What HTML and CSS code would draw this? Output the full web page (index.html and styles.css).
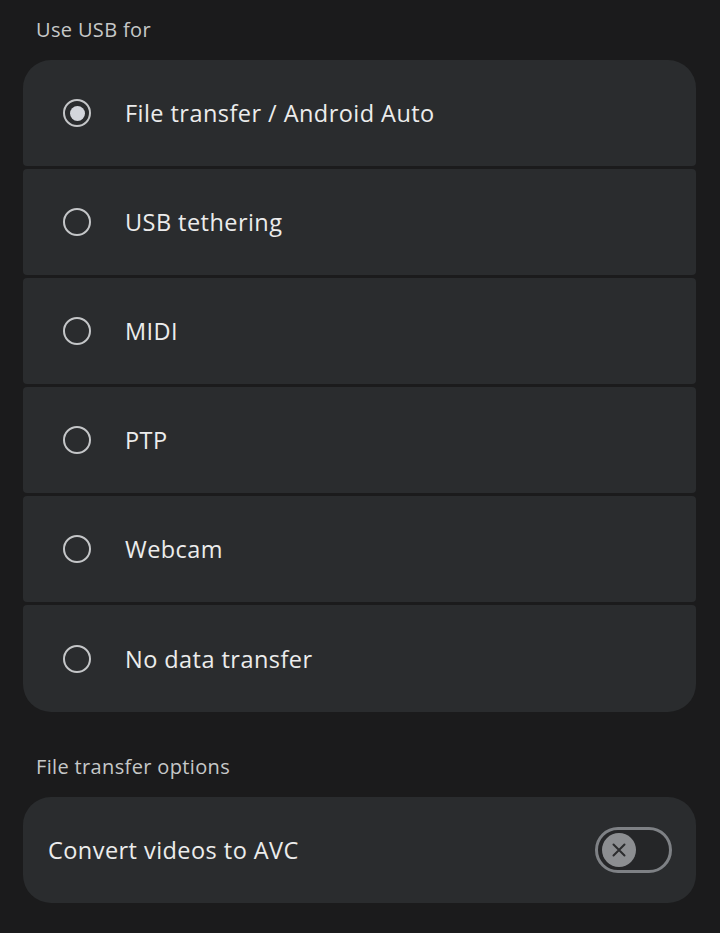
FILE: index.html
```html
<!DOCTYPE html>
<html>
<head>
<meta charset="utf-8">
<link rel="stylesheet" href="styles.css">
</head>
<body>
<div class="page">
  <div class="section-title">Use USB for</div>
  <div class="group">
    <div class="row">
      <span class="radio checked"><span class="dot"></span></span>
      <span class="label">File transfer / Android Auto</span>
    </div>
    <div class="row">
      <span class="radio"></span>
      <span class="label">USB tethering</span>
    </div>
    <div class="row">
      <span class="radio"></span>
      <span class="label">MIDI</span>
    </div>
    <div class="row">
      <span class="radio"></span>
      <span class="label">PTP</span>
    </div>
    <div class="row">
      <span class="radio"></span>
      <span class="label">Webcam</span>
    </div>
    <div class="row">
      <span class="radio"></span>
      <span class="label">No data transfer</span>
    </div>
  </div>
  <div class="section-title second">File transfer options</div>
  <div class="card">
    <span class="label">Convert videos to AVC</span>
    <span class="switch">
      <span class="thumb">
        <svg width="18" height="18" viewBox="0 0 18 18"><path d="M3.5 3.5 L14.5 14.5 M14.5 3.5 L3.5 14.5" stroke="#2b2c2e" stroke-width="2" fill="none" stroke-linecap="round"/></svg>
      </span>
    </span>
  </div>
</div>
</body>
</html>
```

FILE: styles.css
```css
html, body {
  margin: 0;
  padding: 0;
  background: #1b1b1c;
}
body {
  font-family: "Open Sans", Roboto, sans-serif;
  color: #e4e4e4;
}
.page {
  width: 720px;
  height: 933px;
  padding: 0 24px 0 23px;
  box-sizing: border-box;
  overflow: hidden;
}
.section-title {
  font-size: 20px;
  color: #c6c8c8;
  padding-left: 13px;
  height: 60px;
  line-height: 60px;
  letter-spacing: 0.35px;
}
.section-title.second {
  margin-top: 25px;
}
.group {
  display: flex;
  flex-direction: column;
  gap: 3px;
}
.row {
  height: 106px;
  background: #2a2c2e;
  border-radius: 4px;
  display: flex;
  align-items: center;
  padding-left: 40px;
}
.row:first-child {
  border-radius: 28px 28px 4px 4px;
}
.row:last-child {
  border-radius: 4px 4px 28px 28px;
  height: 107px;
}
.radio {
  width: 28px;
  height: 28px;
  border: 2.5px solid #c4c6c8;
  border-radius: 50%;
  box-sizing: border-box;
  display: flex;
  align-items: center;
  justify-content: center;
  flex: none;
}
.radio .dot {
  width: 15px;
  height: 15px;
  border-radius: 50%;
  background: #d3d6dc;
}
.label {
  margin-left: 34px;
  font-size: 23.5px;
  color: #ececec;
  letter-spacing: 0.45px;
}
.card {
  height: 106px;
  background: #2a2c2e;
  border-radius: 28px;
  display: flex;
  align-items: center;
  justify-content: space-between;
  padding: 0 24px 0 25px;
}
.card .label {
  margin-left: 0;
}
.switch {
  width: 77px;
  height: 46px;
  border: 3px solid #7e8185;
  border-radius: 23px;
  box-sizing: border-box;
  background: #252628;
  display: flex;
  align-items: center;
  padding-left: 4px;
}
.thumb {
  width: 34px;
  height: 34px;
  border-radius: 50%;
  background: #8c8e91;
  display: flex;
  align-items: center;
  justify-content: center;
}
```
